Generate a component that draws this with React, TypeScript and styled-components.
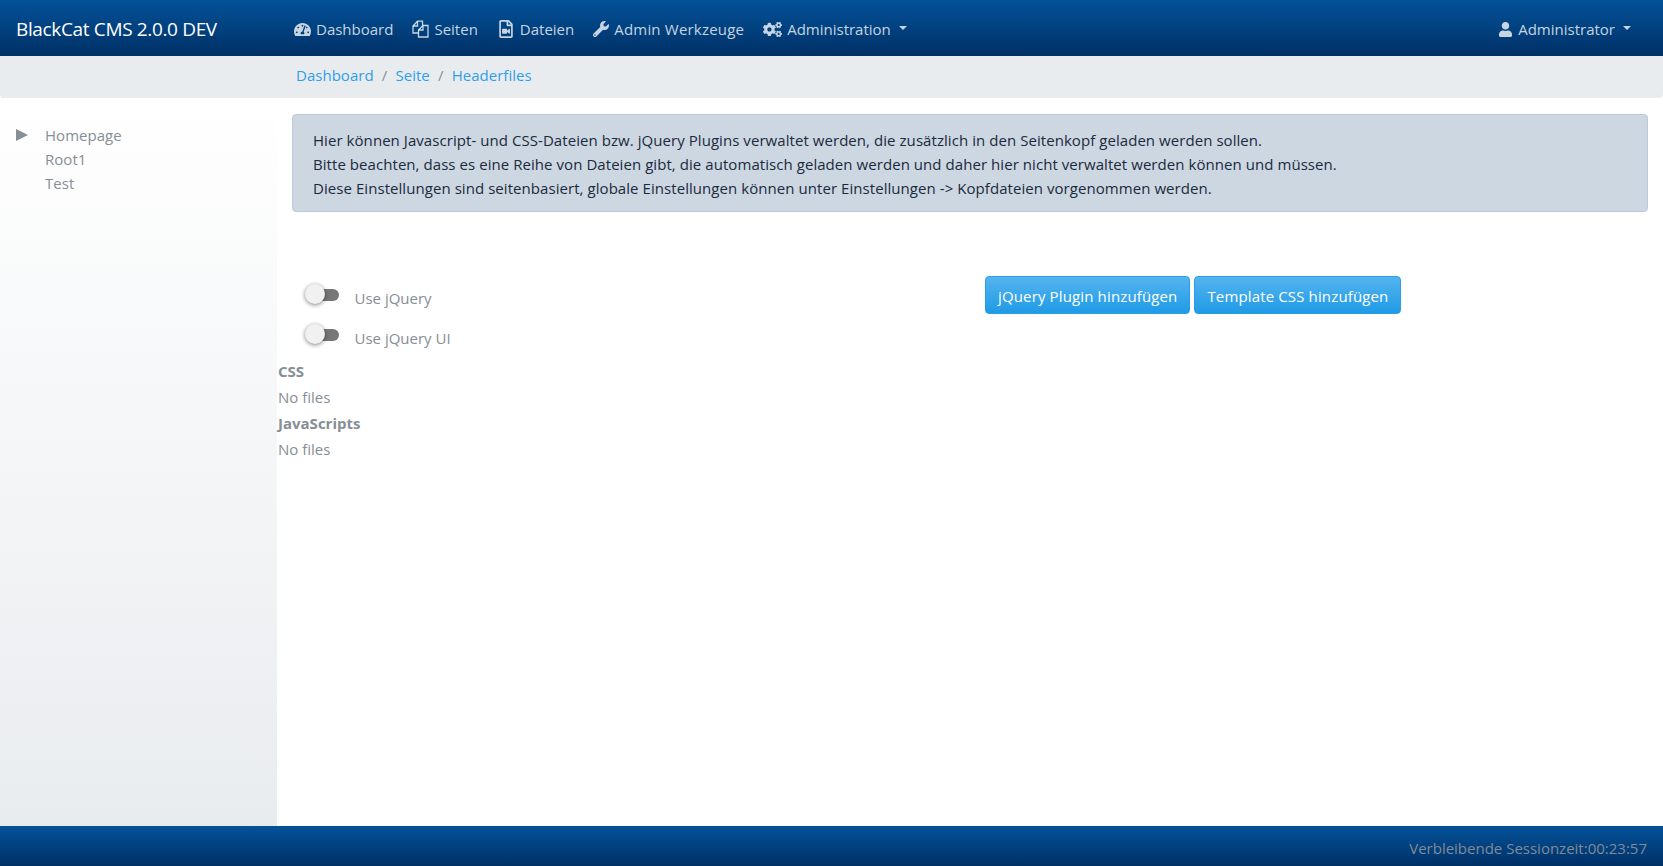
import React from "react";
import styled, { createGlobalStyle } from "styled-components";
import { FaTachometerAlt, FaRegFileVideo, FaWrench, FaCogs, FaUser } from "react-icons/fa";

const GlobalStyle = createGlobalStyle`
  html, body { margin: 0; padding: 0; height: 100%; }
  body {
    font-family: "Open Sans", "Noto Sans", sans-serif;
    font-size: 15px;
    line-height: 24px;
    color: #868e96;
    background: #fff;
  }
  * { box-sizing: border-box; }
`;

const barGradient = "linear-gradient(to bottom, #035299 0%, #003066 100%)";

const Page = styled.div`
  display: flex;
  flex-direction: column;
  height: 866px;
  overflow: hidden;
`;

const Navbar = styled.nav`
  flex: 0 0 56px;
  display: flex;
  align-items: center;
  background: ${barGradient};
  padding: 2px 16px 0;
`;

const Brand = styled.a`
  width: 278px;
  color: #fff;
  font-size: 19px;
  letter-spacing: -0.35px;
`;

const NavList = styled.div`
  display: flex;
  align-items: center;
  gap: 19px;
  flex: 1;
`;

const NavItem = styled.a<{ $track?: number }>`
  display: inline-flex;
  align-items: center;
  gap: 5px;
  color: rgba(255, 255, 255, 0.78);
  white-space: nowrap;
  letter-spacing: ${(p) => p.$track ?? 0}px;
  svg { flex: none; }
`;

const UserItem = styled(NavItem)`
  margin-right: 16px;
`;

const Caret = styled.span`
  width: 0;
  height: 0;
  margin-left: 3px;
  margin-bottom: 3px;
  border-top: 4.5px solid currentColor;
  border-left: 4.5px solid transparent;
  border-right: 4.5px solid transparent;
`;

const Breadcrumb = styled.div`
  flex: 0 0 42px;
  display: flex;
  align-items: center;
  gap: 8.2px;
  padding: 0 0 4px 296px;
  background: #e9ecef;
  border-radius: 0 0 4px 4px;
`;

const Crumb = styled.a`
  color: #2f9fe6;
  letter-spacing: 0.02px;
`;

const Sep = styled.span`
  color: #868e96;
`;

const Main = styled.div`
  flex: 1;
  display: flex;
  min-height: 0;
`;

const Sidebar = styled.aside`
  flex: 0 0 277px;
  background: linear-gradient(to bottom, #ffffff 0%, #e9ecef 100%);
  padding: 25px 0 0 16px;
  letter-spacing: 0.03px;
`;

const TreeRow = styled.div`
  position: relative;
  padding-left: 29px;
`;

const TreeArrow = styled.span`
  position: absolute;
  left: 0;
  top: 6px;
  width: 0;
  height: 0;
  border-left: 12px solid #868e96;
  border-top: 6px solid transparent;
  border-bottom: 6px solid transparent;
`;

const Content = styled.main`
  flex: 1;
  min-width: 0;
  padding: 16px 15px 0 1px;
`;

const Alert = styled.div`
  margin-left: 14px;
  padding: 13px 20px 11px;
  background: #cdd7e2;
  border: 1px solid #bccadb;
  border-radius: 4px;
  color: #1b2a3d;
  letter-spacing: 0.06px;
`;

const OptionsRow = styled.div`
  display: flex;
  margin-top: 64px;
`;

const Toggles = styled.div`
  width: 707px;
  padding: 2px 0 0 28px;
`;

const ToggleRow = styled.label`
  display: flex;
  align-items: center;
  height: 40px;
  gap: 15.5px;
`;

const Track = styled.span`
  position: relative;
  width: 33px;
  height: 12px;
  border-radius: 6px;
  background: #777;
  margin-bottom: 6px;
  &::before {
    content: "";
    position: absolute;
    left: -1px;
    top: -5px;
    width: 20px;
    height: 20px;
    border-radius: 50%;
    background: #f1f1f1;
    box-shadow: 0 1px 4px rgba(0, 0, 0, 0.5);
  }
`;

const Buttons = styled.div`
  display: flex;
  gap: 4px;
`;

const Button = styled.button`
  height: 38px;
  padding: 2px 12px 0;
  font: inherit;
  letter-spacing: 0.14px;
  color: #fff;
  background: linear-gradient(to bottom, #54b4ee 0%, #1f9be6 100%);
  border: 1px solid #2a9fe6;
  border-radius: 4px;
`;

const Heading = styled.div`
  font-weight: 700;
  line-height: 26px;
`;

const Files = styled.div`
  line-height: 26px;
`;

const Footer = styled.footer`
  flex: 0 0 40px;
  display: flex;
  align-items: center;
  justify-content: flex-end;
  padding: 3px 16px 0 0;
  background: ${barGradient};
  color: #7f8b99;
`;

function FilesIcon() {
  return (
    <svg width="17" height="18" viewBox="0 0 17 18" fill="none" stroke="currentColor" strokeWidth="1.3">
      <path d="M6.5 13H1V6L5.5 1.2H10.5V5" />
      <path d="M5.5 1.5V6H1" />
      <path d="M11 5.5H16V17H6.5V10L11 5.5Z" />
      <path d="M11 5.5V10H6.5" />
    </svg>
  );
}

export default function App() {
  return (
    <Page>
      <GlobalStyle />
      <Navbar>
        <Brand>BlackCat CMS 2.0.0 DEV</Brand>
        <NavList>
          <NavItem><FaTachometerAlt size={17} />Dashboard</NavItem>
          <NavItem><FilesIcon />Seiten</NavItem>
          <NavItem><FaRegFileVideo size={18} />Dateien</NavItem>
          <NavItem $track={0.2}><FaWrench size={16} />Admin Werkzeuge</NavItem>
          <NavItem><FaCogs size={19} />Administration<Caret /></NavItem>
        </NavList>
        <UserItem><FaUser size={15} />Administrator<Caret /></UserItem>
      </Navbar>
      <Breadcrumb>
        <Crumb>Dashboard</Crumb>
        <Sep>/</Sep>
        <Crumb>Seite</Crumb>
        <Sep>/</Sep>
        <Crumb>Headerfiles</Crumb>
      </Breadcrumb>
      <Main>
        <Sidebar>
          <TreeRow><TreeArrow />Homepage</TreeRow>
          <TreeRow>Root1</TreeRow>
          <TreeRow>Test</TreeRow>
        </Sidebar>
        <Content>
          <Alert>
            Hier können Javascript- und CSS-Dateien bzw. jQuery Plugins verwaltet werden, die zusätzlich in den Seitenkopf geladen werden sollen.<br />
            Bitte beachten, dass es eine Reihe von Dateien gibt, die automatisch geladen werden und daher hier nicht verwaltet werden können und müssen.<br />
            Diese Einstellungen sind seitenbasiert, globale Einstellungen können unter Einstellungen -&gt; Kopfdateien vorgenommen werden.
          </Alert>
          <OptionsRow>
            <Toggles>
              <ToggleRow><Track />Use jQuery</ToggleRow>
              <ToggleRow><Track />Use jQuery UI</ToggleRow>
            </Toggles>
            <Buttons>
              <Button>jQuery Plugin hinzufügen</Button>
              <Button>Template CSS hinzufügen</Button>
            </Buttons>
          </OptionsRow>
          <Heading>CSS</Heading>
          <Files>No files</Files>
          <Heading>JavaScripts</Heading>
          <Files>No files</Files>
        </Content>
      </Main>
      <Footer>Verbleibende Sessionzeit:00:23:57</Footer>
    </Page>
  );
}
